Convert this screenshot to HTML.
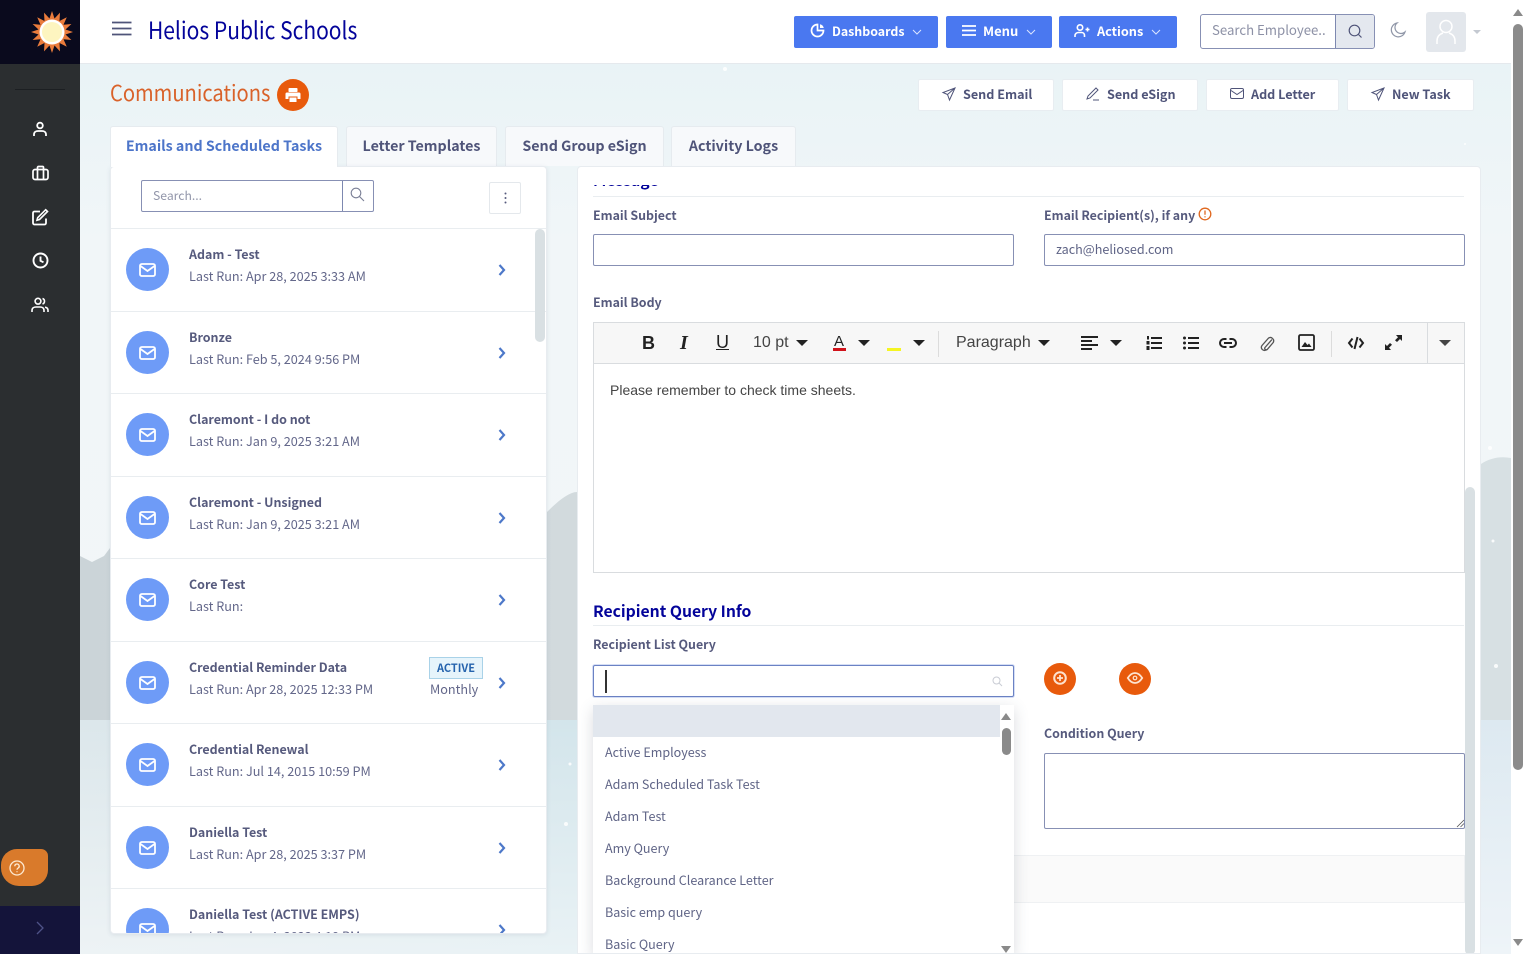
<!DOCTYPE html>
<html><head><meta charset="utf-8"><title>Communications</title>
<style>
*{box-sizing:border-box}
html,body{margin:0;padding:0;width:1526px;height:954px;overflow:hidden;background:#fff}
body{font-family:"Noto Sans CJK JP","Liberation Sans",sans-serif;color:#4f5479;position:relative}
.a{position:absolute}
.t{position:absolute;white-space:nowrap;line-height:1}
svg{position:absolute;overflow:visible}
.btn{position:absolute;top:16px;height:32px;background:#4a78f0;border-radius:2px;color:#fff;font-size:12.4px;font-weight:700}
.btn span{position:absolute;top:7px;line-height:16px;white-space:nowrap}
.wb{position:absolute;top:79px;height:32px;background:#fff;border:1px solid #e8edf1;border-radius:2px;color:#4f5479;font-size:12.6px;font-weight:700}
.wb span{position:absolute;top:6px;line-height:16px;white-space:nowrap}
.tab{position:absolute;top:126px;height:40px;background:#f7f9fb;border:1px solid #e6ebef;border-bottom:0;border-radius:3px 3px 0 0;font-size:14.25px;font-weight:700;color:#4f5479;line-height:38px;text-align:center}
.row{position:absolute;left:0;width:437px;height:83px;border-top:1px solid #e9edf0}
.row .c{position:absolute;left:15px;top:19px;width:43px;height:43px;border-radius:50%;background:#6e9bf7}
.row .n{position:absolute;left:78px;top:17px;font-size:12.45px;line-height:16px;font-weight:700;color:#565a7d;white-space:nowrap}
.row .s{position:absolute;left:78px;top:39px;font-size:12.65px;line-height:16px;color:#63678a;white-space:nowrap}
.row svg.m{left:28px;top:33px}
.row svg.r{left:386.500px;top:35px}
.lab{position:absolute;font-size:12.4px;font-weight:700;color:#565a7d;line-height:16px;white-space:nowrap}
.inp{position:absolute;background:#fff;border:1px solid #8790b4;border-radius:2px}
.opt{position:absolute;left:12px;font-size:12.55px;line-height:16px;color:#5f6486;white-space:nowrap}
.tb{position:absolute;font-family:"Liberation Sans",sans-serif;color:#222}
.car{position:absolute;top:340px;width:0;height:0;border-left:6px solid transparent;border-right:6px solid transparent;border-top:6px solid #222}
</style></head><body>

<!-- page background -->
<div class="a" style="left:80px;top:64px;width:1431px;height:890px;background:linear-gradient(180deg,#e9f3f6 0%,#f1f6f8 20%,#f2f6f8 100%);overflow:hidden">
<svg width="1431" height="890" style="left:0;top:0">
<defs>
<linearGradient id="g1" x1="0" x2="1" y1="0" y2="0"><stop offset="0" stop-color="#cbd4d8"/><stop offset=".35" stop-color="#d2dadd"/><stop offset="1" stop-color="#d7e0e3"/></linearGradient>
<linearGradient id="g2" x1="0" x2="1" y1="0" y2="0"><stop offset="0" stop-color="#dce7eb"/><stop offset=".35" stop-color="#d3e5eb"/><stop offset="1" stop-color="#dde9f1"/></linearGradient>
<linearGradient id="g3" x1="0" x2="0" y1="0" y2="1"><stop offset="0" stop-color="#fff" stop-opacity="0"/><stop offset="1" stop-color="#fff" stop-opacity=".5"/></linearGradient>
</defs>
<path d="M0 492 L12 498 L24 492 L30 484 C120 470 300 465 467 448 C480 435 490 428 497 428 C700 420 1100 430 1401 400 C1410 394 1420 392 1431 394 L1431 656 L0 656Z" fill="url(#g1)"/>
<rect x="0" y="656" width="1431" height="234" fill="url(#g2)"/>
<rect x="0" y="656" width="1431" height="234" fill="url(#g3)"/>
<g fill="#fff" opacity=".85"><circle cx="1410" cy="384" r="2"/><circle cx="1416" cy="602" r="2"/><circle cx="1413" cy="477" r="1.5"/><circle cx="645" cy="5" r="2"/><circle cx="1385" cy="80" r="1"/><circle cx="490" cy="700" r="1.500"/><circle cx="486" cy="760" r="2"/></g>
</svg></div>

<!-- sidebar -->
<div class="a" style="left:0;top:0;width:80px;height:954px;background:#2b2e30"></div>
<div class="a" style="left:0;top:0;width:80px;height:64px;background:#0a0a1d"></div>
<div class="a" style="left:0;top:906px;width:80px;height:48px;background:#14143a"></div>
<div class="a" style="left:15px;top:89px;width:50px;height:1px;background:#1c1f22"></div>
<svg width="42" height="42" viewBox="-21 -21 42 42" style="left:31px;top:11px"><polygon points="21,0 13.5,2.5 19.4,8 11.500,7.200 14.8,14.8 7.5,11 8,19.4 2.5,13.5 0,21 -2.5,13.5 -8,19.4 -7.5,11 -14.8,14.8 -11.500,7.200 -19.4,8 -13.5,2.5 -21,0 -13.5,-2.5 -19.4,-8 -11.500,-7.200 -14.8,-14.8 -7.5,-11 -8,-19.4 -2.5,-13.5 0,-21 2.5,-13.5 8,-19.4 7.5,-11 14.8,-14.8 11.500,-7.200 19.4,-8 13.5,-2.5" fill="#ea7c3c"/><circle r="12.500" fill="#fff"/><circle r="10" fill="#fdf5c0"/></svg>
<svg width="16" height="16" viewBox="0 0 16 16" style="left:32px;top:121px" fill="none" stroke="#fff" stroke-width="1.800"><circle cx="8" cy="4.500" r="2.800"/><path d="M2 15v-1.500C2 11 4 10 6 10h4c2 0 4 1 4 3.500V15"/></svg>
<svg width="17" height="16" viewBox="0 0 17 16" style="left:31.500px;top:165px" fill="none" stroke="#fff" stroke-width="1.700"><rect x="1" y="4.500" width="15" height="10" rx="2"/><path d="M5.500 4.500V2.500a1 1 0 0 1 1-1h4a1 1 0 0 1 1 1v2M5.500 4.500v10M11.500 4.500v10"/></svg>
<svg width="17" height="17" viewBox="0 0 17 17" style="left:31.500px;top:209px" fill="none" stroke="#fff" stroke-width="1.800"><path d="M14 9.500V14a1.500 1.500 0 0 1-1.500 1.500h-10A1.500 1.500 0 0 1 1 14V4a1.500 1.500 0 0 1 1.500-1.500H8"/><path d="M15.500 2.500l-8 8-2.500.7.700-2.500 8-8z" stroke-width="1.600"/></svg>
<svg width="17" height="17" viewBox="0 0 17 17" style="left:31.500px;top:252px" fill="none" stroke="#fff" stroke-width="1.900"><circle cx="8.500" cy="8.500" r="7"/><path d="M8.500 4.500v4.300l3 1.500"/></svg>
<svg width="18" height="16" viewBox="0 0 18 16" style="left:31px;top:297px" fill="none" stroke="#fff" stroke-width="1.600"><circle cx="7" cy="4.200" r="2.900"/><path d="M1 15v-1.500C1 11 3 10 5 10h4c2 0 4 1 4 3.500V15"/><path d="M11.500 1.500a2.900 2.900 0 0 1 0 5.500M14 10.200c2 .3 3 1.500 3 3.300V15"/></svg>
<div class="a" style="left:1px;top:849px;width:47px;height:37px;background:#d97a2b;border-radius:16px 7px 16px 18px"></div>
<svg width="16" height="16" viewBox="0 0 16 16" style="left:9px;top:860px" fill="none" stroke="#fde9d2" stroke-width="1.300"><circle cx="8" cy="8" r="7"/><path d="M5.800 6.200a2.200 2.200 0 1 1 3.300 1.900C8.400 8.500 8 9 8 9.800M8 11.300v1"/></svg>
<svg width="10" height="14" viewBox="0 0 10 14" style="left:35px;top:921px" fill="none" stroke="#4e5288" stroke-width="1.300"><path d="M2 1l6 6-6 6"/></svg>

<!-- header -->
<div class="a" style="left:80px;top:0;width:1431px;height:64px;background:#fff;border-bottom:1px solid #e5e9ed"></div>
<svg width="20" height="16" viewBox="0 0 20 16" style="left:112px;top:21px" fill="none" stroke="#4f5479" stroke-width="1.800"><path d="M0 1.500h19.500M0 7.500h19.500M0 13.500h19.500"/></svg>
<div class="t" style="left:148px;top:15px;font-size:24px;line-height:28px;color:#03039a;transform:scaleX(.875);transform-origin:0 0">Helios Public Schools</div>

<div class="btn" style="left:794px;width:144px"><svg width="15" height="15" viewBox="0 0 15 15" style="left:16px;top:7px" fill="none" stroke="#fff" stroke-width="1.700"><path d="M7.500 1.500a6 6 0 1 0 6 6h-6z"/><path d="M10 1.200a5 5 0 0 1 3.800 3.800H10z" fill="#fff" stroke="none"/></svg><span style="left:38px">Dashboards</span><svg width="10" height="6" viewBox="0 0 10 6" style="left:118px;top:13px" fill="none" stroke="#dbe5ff" stroke-width="1"><path d="M1 1l4 4 4-4"/></svg></div>
<div class="btn" style="left:946px;width:106px"><svg width="14" height="11" viewBox="0 0 14 11" style="left:16px;top:9px" fill="none" stroke="#fff" stroke-width="1.700"><path d="M0 1h14M0 5.500h14M0 10h14"/></svg><span style="left:37px;font-size:13px">Menu</span><svg width="10" height="6" viewBox="0 0 10 6" style="left:80px;top:13px" fill="none" stroke="#dbe5ff" stroke-width="1"><path d="M1 1l4 4 4-4"/></svg></div>
<div class="btn" style="left:1059px;width:118px"><svg width="16" height="14" viewBox="0 0 16 14" style="left:15px;top:8px" fill="none" stroke="#fff" stroke-width="1.600"><circle cx="6" cy="3.500" r="2.700"/><path d="M1 13v-1.500C1 9.500 3 8.500 4.500 8.500h3c1.500 0 3 1 3 3V13M11.500 5.500h4M13.500 3.500v4"/></svg><span style="left:38px;font-size:12.700px">Actions</span><svg width="10" height="6" viewBox="0 0 10 6" style="left:92px;top:13px" fill="none" stroke="#dbe5ff" stroke-width="1"><path d="M1 1l4 4 4-4"/></svg></div>

<div class="inp" style="left:1200px;top:14px;width:175px;height:35px;border-radius:3px;overflow:hidden"><div class="t" style="left:11px;top:7px;font-size:13.2px;line-height:16px;color:#8d91a6">Search Employee..</div><div class="a" style="left:134px;top:0;width:40px;height:35px;background:#e4e8ef;border-left:1px solid #7d88b0"></div><svg width="15" height="16" viewBox="0 0 15 16" style="left:147px;top:9px" fill="none" stroke="#4f5479" stroke-width="1.200"><circle cx="6.500" cy="6.500" r="5.300"/><path d="M10.500 10.500l3 3"/></svg></div>
<svg width="16" height="16" viewBox="0 0 16 16" style="left:1390px;top:22px" fill="none" stroke="#9097a8" stroke-width="1.200"><path d="M7 1a7 7 0 1 0 8 9 6 6 0 0 1-8-9z"/></svg>
<div class="a" style="left:1426px;top:12px;width:40px;height:40px;background:#e3e7ec;border-radius:3px"></div>
<svg width="20" height="26" viewBox="0 0 20 26" style="left:1436px;top:19px" fill="none" stroke="#fff" stroke-width="1.500"><circle cx="10" cy="7.500" r="6"/><path d="M1 25v-3c0-5 3-7 6-8M19 25v-3c0-5-3-7-6-8"/></svg>
<div class="a" style="left:1473px;top:30px;width:0;height:0;border-left:4px solid transparent;border-right:4px solid transparent;border-top:4px solid #c4c9d1"></div>

<!-- title row -->
<div class="t" style="left:110px;top:78px;font-size:22px;line-height:28px;color:#d9622a;transform:scaleX(.915);transform-origin:0 0">Communications</div>
<div class="a" style="left:277px;top:79px;width:32px;height:32px;border-radius:50%;background:#e85a0c"></div>
<svg width="16" height="16" viewBox="0 0 16 16" style="left:285px;top:87px" fill="#fff"><rect x="3.500" y="1" width="9" height="4" rx=".8"/><path d="M2 5.500h12a1.500 1.500 0 0 1 1.500 1.500v5H12.500v-2.500h-9V12H.5V7A1.500 1.500 0 0 1 2 5.500z"/><rect x="4.500" y="10.500" width="7" height="4.500"/></svg>

<div class="wb" style="left:918px;width:136px"><svg width="14" height="14" viewBox="0 0 14 14" style="left:23px;top:7px" fill="none" stroke="#4f5479" stroke-width="1"><path d="M13 1L1 5.500l4.500 2L7.500 13zM13 1L5.500 7.500"/></svg><span style="left:44px">Send Email</span></div>
<div class="wb" style="left:1062px;width:136px"><svg width="14" height="14" viewBox="0 0 14 14" style="left:23px;top:7px" fill="none" stroke="#4f5479" stroke-width="1"><path d="M10 1l2 2-8 8-3 1 1-3zM7 13h6"/></svg><span style="left:44px">Send eSign</span></div>
<div class="wb" style="left:1206px;width:133px"><svg width="14" height="12" viewBox="0 0 14 12" style="left:23px;top:8px" fill="none" stroke="#4f5479" stroke-width="1"><rect x=".5" y=".5" width="13" height="10" rx="1.500"/><path d="M1 2.500l6 4 6-4"/></svg><span style="left:44px">Add Letter</span></div>
<div class="wb" style="left:1347px;width:127px"><svg width="14" height="14" viewBox="0 0 14 14" style="left:23px;top:7px" fill="none" stroke="#4f5479" stroke-width="1"><path d="M13 1L1 5.500l4.500 2L7.500 13zM13 1L5.500 7.500"/></svg><span style="left:44px">New Task</span></div>

<!-- tabs -->
<div class="tab" style="left:110px;width:228px;background:#fff;color:#4d75c9;height:41px;z-index:3">Emails and Scheduled Tasks</div>
<div class="tab" style="left:346px;width:151px">Letter Templates</div>
<div class="tab" style="left:505px;width:159px">Send Group eSign</div>
<div class="tab" style="left:671px;width:125px">Activity Logs</div>

<!-- left panel -->
<div class="a" style="left:110px;top:166px;width:437px;height:768px;background:#fff;border:1px solid #e8ecf0;border-radius:4px;box-shadow:0 1px 4px rgba(80,100,120,.12);overflow:hidden">
 <div class="inp" style="left:30px;top:13px;width:233px;height:32px"><div class="t" style="left:11px;top:6px;font-size:12.2px;line-height:16px;color:#9296aa">Search...</div><div class="a" style="left:200px;top:0;width:1px;height:30px;background:#7d88b0"></div><svg width="15" height="15" viewBox="0 0 15 15" style="left:208px;top:6px" fill="none" stroke="#7a7f96" stroke-width="1.100"><circle cx="6" cy="6" r="4.800"/><path d="M9.500 9.500l4.500 4.500"/></svg></div>
 <div class="a" style="left:378px;top:15px;width:32px;height:32px;border:1px solid #e4e8ec;border-radius:2px"></div>
 <svg width="3" height="12" viewBox="0 0 3 12" style="left:393px;top:25px" fill="#565a7d"><circle cx="1.500" cy="1.500" r="1"/><circle cx="1.500" cy="6" r="1"/><circle cx="1.500" cy="10.500" r="1"/></svg>

 <div class="row" style="top:61px"><div class="c"></div><svg class="m" width="17" height="14" viewBox="0 0 17 14" fill="none" stroke="#fff" stroke-width="1.800" style="top:34px"><rect x="1" y="1" width="15" height="12" rx="1.800"/><path d="M1.500 3l7 5 7-5"/></svg><div class="n">Adam - Test</div><div class="s">Last Run: Apr 28, 2025 3:33 AM</div><svg class="r" width="8" height="12" viewBox="0 0 8 12" fill="none" stroke="#4d78c9" stroke-width="2.200"><path d="M1.500 1l4.500 5-4.500 5"/></svg></div>
 <div class="row" style="top:144px"><div class="c"></div><svg class="m" width="17" height="14" viewBox="0 0 17 14" fill="none" stroke="#fff" stroke-width="1.800" style="top:34px"><rect x="1" y="1" width="15" height="12" rx="1.800"/><path d="M1.500 3l7 5 7-5"/></svg><div class="n">Bronze</div><div class="s">Last Run: Feb 5, 2024 9:56 PM</div><svg class="r" width="8" height="12" viewBox="0 0 8 12" fill="none" stroke="#4d78c9" stroke-width="2.200"><path d="M1.500 1l4.500 5-4.500 5"/></svg></div>
 <div class="row" style="top:226px"><div class="c"></div><svg class="m" width="17" height="14" viewBox="0 0 17 14" fill="none" stroke="#fff" stroke-width="1.800" style="top:34px"><rect x="1" y="1" width="15" height="12" rx="1.800"/><path d="M1.500 3l7 5 7-5"/></svg><div class="n">Claremont - I do not</div><div class="s">Last Run: Jan 9, 2025 3:21 AM</div><svg class="r" width="8" height="12" viewBox="0 0 8 12" fill="none" stroke="#4d78c9" stroke-width="2.200"><path d="M1.500 1l4.500 5-4.500 5"/></svg></div>
 <div class="row" style="top:309px"><div class="c"></div><svg class="m" width="17" height="14" viewBox="0 0 17 14" fill="none" stroke="#fff" stroke-width="1.800" style="top:34px"><rect x="1" y="1" width="15" height="12" rx="1.800"/><path d="M1.500 3l7 5 7-5"/></svg><div class="n">Claremont - Unsigned</div><div class="s">Last Run: Jan 9, 2025 3:21 AM</div><svg class="r" width="8" height="12" viewBox="0 0 8 12" fill="none" stroke="#4d78c9" stroke-width="2.200"><path d="M1.500 1l4.500 5-4.500 5"/></svg></div>
 <div class="row" style="top:391px"><div class="c"></div><svg class="m" width="17" height="14" viewBox="0 0 17 14" fill="none" stroke="#fff" stroke-width="1.800" style="top:34px"><rect x="1" y="1" width="15" height="12" rx="1.800"/><path d="M1.500 3l7 5 7-5"/></svg><div class="n">Core Test</div><div class="s">Last Run:</div><svg class="r" width="8" height="12" viewBox="0 0 8 12" fill="none" stroke="#4d78c9" stroke-width="2.200"><path d="M1.500 1l4.500 5-4.500 5"/></svg></div>
 <div class="row" style="top:474px"><div class="c"></div><svg class="m" width="17" height="14" viewBox="0 0 17 14" fill="none" stroke="#fff" stroke-width="1.800" style="top:34px"><rect x="1" y="1" width="15" height="12" rx="1.800"/><path d="M1.500 3l7 5 7-5"/></svg><div class="n">Credential Reminder Data</div><div class="s">Last Run: Apr 28, 2025 12:33 PM</div><div class="a" style="left:318px;top:15px;width:54px;height:22px;background:#e6f4fb;border:1px solid #a9d2e8;font-size:11px;font-weight:700;color:#2563ad;text-align:center;line-height:20px">ACTIVE</div><div class="a" style="left:319px;top:39px;font-size:12.65px;line-height:16px;color:#63678a">Monthly</div><svg class="r" width="8" height="12" viewBox="0 0 8 12" fill="none" stroke="#4d78c9" stroke-width="2.200"><path d="M1.500 1l4.500 5-4.500 5"/></svg></div>
 <div class="row" style="top:556px"><div class="c"></div><svg class="m" width="17" height="14" viewBox="0 0 17 14" fill="none" stroke="#fff" stroke-width="1.800" style="top:34px"><rect x="1" y="1" width="15" height="12" rx="1.800"/><path d="M1.500 3l7 5 7-5"/></svg><div class="n">Credential Renewal</div><div class="s">Last Run: Jul 14, 2015 10:59 PM</div><svg class="r" width="8" height="12" viewBox="0 0 8 12" fill="none" stroke="#4d78c9" stroke-width="2.200"><path d="M1.500 1l4.500 5-4.500 5"/></svg></div>
 <div class="row" style="top:639px"><div class="c"></div><svg class="m" width="17" height="14" viewBox="0 0 17 14" fill="none" stroke="#fff" stroke-width="1.800" style="top:34px"><rect x="1" y="1" width="15" height="12" rx="1.800"/><path d="M1.500 3l7 5 7-5"/></svg><div class="n">Daniella Test</div><div class="s">Last Run: Apr 28, 2025 3:37 PM</div><svg class="r" width="8" height="12" viewBox="0 0 8 12" fill="none" stroke="#4d78c9" stroke-width="2.200"><path d="M1.500 1l4.500 5-4.500 5"/></svg></div>
 <div class="row" style="top:721px"><div class="c"></div><svg class="m" width="17" height="14" viewBox="0 0 17 14" fill="none" stroke="#fff" stroke-width="1.800" style="top:34px"><rect x="1" y="1" width="15" height="12" rx="1.800"/><path d="M1.500 3l7 5 7-5"/></svg><div class="n">Daniella Test (ACTIVE EMPS)</div><div class="s">Last Run: Jan 4, 2023 4:19 PM</div><svg class="r" width="8" height="12" viewBox="0 0 8 12" fill="none" stroke="#4d78c9" stroke-width="2.200"><path d="M1.500 1l4.500 5-4.500 5"/></svg></div>
 <div class="a" style="left:424px;top:62px;width:10px;height:113px;background:#d9e0e3;border-radius:5px"></div>
</div>

<!-- right panel -->
<div class="a" style="left:577px;top:166px;width:904px;height:788px;background:#fff;border:1px solid #e8ecf0;border-radius:4px 4px 0 0;overflow:hidden">
 <div class="a" style="left:0;top:18px;width:890px;height:11px;overflow:hidden"><div class="t" style="left:15px;top:-15px;font-size:15.7px;line-height:20px;font-weight:700;color:#03039a">Message</div></div>
 <div class="a" style="left:15px;top:29px;width:871px;height:1px;background:#e9edf0"></div>
 <div class="lab" style="left:15px;top:40px">Email Subject</div>
 <div class="lab" style="left:466px;top:40px">Email Recipient(s), if any</div>
 <svg width="14" height="14" viewBox="0 0 14 14" style="left:620px;top:40px" fill="none" stroke="#e0681f" stroke-width="1.300"><circle cx="7" cy="7" r="5.800"/><path d="M7 3.500v4.200M7 9.200v1.200"/></svg>
 <div class="inp" style="left:15px;top:67px;width:421px;height:32px"></div>
 <div class="inp" style="left:466px;top:67px;width:421px;height:32px"><div class="t" style="left:11px;top:6px;font-size:12.6px;line-height:16px;color:#5f6486">zach@heliosed.com</div></div>
 <div class="lab" style="left:15px;top:127px">Email Body</div>

 <div class="a" style="left:15px;top:155px;width:872px;height:251px;border:1px solid #d9dcdf;background:#fff">
  <div class="a" style="left:0;top:0;width:870px;height:41px;background:#f7f7f7;border-bottom:1px solid #d9dcdf"></div>
  <div class="a" style="left:833px;top:0;width:1px;height:41px;background:#d9dcdf"></div>
  <div class="a" style="left:344px;top:8px;width:1px;height:26px;background:#dcdcdc"></div>
  <div class="a" style="left:737px;top:8px;width:1px;height:26px;background:#dcdcdc"></div>
  <div class="t" style="left:16px;top:58px;font-family:'Liberation Sans',sans-serif;font-size:14px;line-height:18px;color:#444">Please remember to check time sheets.</div>
 </div>
 <!-- toolbar -->
 <div class="tb t" style="left:64px;top:166px;font-size:18px;line-height:20px;font-weight:700">B</div>
 <div class="tb t" style="left:102px;top:165px;font-size:20px;line-height:22px;font-weight:700;font-style:italic;font-family:'Liberation Serif',serif">I</div>
 <div class="tb t" style="left:138px;top:165px;font-size:18px;line-height:20px;text-decoration:underline">U</div>
 <div class="tb t" style="left:175px;top:166px;font-size:16px;line-height:20px;color:#444">10 pt</div>
 <div class="tb t" style="left:256px;top:166px;font-size:15px;line-height:18px">A</div>
 <div class="a" style="left:255px;top:181px;width:13px;height:3px;background:#d0121a"></div>
 <div class="a" style="left:309px;top:181px;width:14px;height:3px;background:#f5f522"></div>
 <div class="tb t" style="left:378px;top:166px;font-size:16px;line-height:20px;color:#444">Paragraph</div>
 <svg width="18" height="14" viewBox="0 0 18 14" style="left:503px;top:169px" fill="#222"><rect y="0" width="17" height="2"/><rect y="4" width="11" height="2"/><rect y="8" width="17" height="2"/><rect y="12" width="11" height="2"/></svg>
 <svg width="16" height="14" viewBox="0 0 16 14" style="left:568px;top:169px" fill="#222"><rect x="5" y="1" width="11" height="2"/><rect x="5" y="6" width="11" height="2"/><rect x="5" y="11" width="11" height="2"/><rect x="1" y="0" width="2" height="3.500"/><rect x=".5" y="5" width="3" height="3.500"/><rect x=".5" y="10" width="3" height="4"/></svg>
 <svg width="16" height="14" viewBox="0 0 16 14" style="left:605px;top:169px" fill="#222"><rect x="5" y="1" width="11" height="2"/><rect x="5" y="6" width="11" height="2"/><rect x="5" y="11" width="11" height="2"/><circle cx="1.500" cy="2" r="1.500"/><circle cx="1.500" cy="7" r="1.500"/><circle cx="1.500" cy="12" r="1.500"/></svg>
 <svg width="18" height="10" viewBox="0 0 18 10" style="left:641px;top:171px" fill="none" stroke="#222" stroke-width="2"><path d="M7.500 1H5a4 4 0 0 0 0 8h2.500M10.500 1H13a4 4 0 0 1 0 8h-2.500M5 5h8"/></svg>
 <svg width="14" height="16" viewBox="0 0 14 16" style="left:682px;top:169px" fill="none" stroke="#555" stroke-width="1.300"><path d="M12 3.500L5 11.500a1.500 1.500 0 0 0 2.200 2l6-7a3.300 3.300 0 0 0-4.800-4.300L2 9.500c-2 3 1.500 6.500 4.500 4"/></svg>
 <svg width="17" height="17" viewBox="0 0 17 17" style="left:720px;top:167px"><rect x="1" y="1" width="15" height="15" rx="1.500" fill="none" stroke="#222" stroke-width="1.800"/><path d="M3.500 13l3.500-5 2.500 3 1.500-1.500 2.500 3.500z" fill="#222"/></svg>
 <svg width="16" height="12" viewBox="0 0 16 12" style="left:770px;top:170px" fill="none" stroke="#222" stroke-width="2"><path d="M4.500 1.500L1 6l3.500 4.500M11.500 1.500L15 6l-3.500 4.500M9.500 0L6.500 12"/></svg>
 <svg width="17" height="15" viewBox="0 0 17 15" style="left:807px;top:168px" fill="#222"><path d="M11 0h6v6l-2-2-3 3-2-1.800 3-3zM6 15H0V9l2 2 3-3 2 1.800-3 3z"/></svg>

 <div class="a" style="left:15px;top:434px;font-size:15.7px;line-height:20px;font-weight:700;color:#03039a;white-space:nowrap">Recipient Query Info</div>
 <div class="a" style="left:15px;top:458px;width:871px;height:1px;background:#e9edf0"></div>
 <div class="lab" style="left:15px;top:469px">Recipient List Query</div>
 <div class="inp" style="left:15px;top:498px;width:421px;height:32px;border-color:#6b82c4;box-shadow:0 0 0 1px #d5def5"><div class="a" style="left:11px;top:4px;width:1.500px;height:23px;background:#333"></div><svg width="11" height="11" viewBox="0 0 11 11" style="left:398px;top:10px" fill="none" stroke="#c9ccd4" stroke-width="1"><circle cx="4.500" cy="4.500" r="3.500"/><path d="M7 7l3 3"/></svg></div>
 <div class="a" style="left:466px;top:496px;width:32px;height:32px;border-radius:50%;background:#e85a0c"></div>
 <svg width="14" height="14" viewBox="0 0 14 14" style="left:475px;top:504px" fill="none" stroke="#fde3d0" stroke-width="2"><circle cx="7" cy="7" r="5.800"/><path d="M7 4v6M4 7h6" stroke-width="1.800"/></svg>
 <div class="a" style="left:541px;top:496px;width:32px;height:32px;border-radius:50%;background:#e85a0c"></div>
 <svg width="16" height="12" viewBox="0 0 16 12" style="left:549px;top:505px" fill="none" stroke="#fde3d0" stroke-width="1.800"><path d="M.8 6C3 2.500 5.500 1 8 1s5 1.500 7.200 5C13 9.500 10.500 11 8 11S3 9.500.8 6z"/><circle cx="8" cy="6" r="1.800" stroke-width="1.200"/></svg>

 <div class="lab" style="left:466px;top:558px">Condition Query</div>
 <div class="inp" style="left:466px;top:586px;width:421px;height:76px"><svg width="8" height="8" viewBox="0 0 8 8" style="left:411px;top:65px" fill="none" stroke="#555" stroke-width=".8"><path d="M1 8l7-7M4.500 8L8 4.500"/></svg></div>
 <div class="a" style="left:15px;top:688px;width:872px;height:48px;background:#fafafa;border:1px solid #eff1f3"></div>

 <!-- dropdown -->
 <div class="a" style="left:15px;top:538px;width:421px;height:250px;background:#fff;box-shadow:0 4px 14px rgba(70,80,100,.2)">
  <div class="a" style="left:0;top:0;width:407px;height:32px;background:#e2e7ee"></div>
  <div class="opt" style="top:39px">Active Employess</div>
  <div class="opt" style="top:71px">Adam Scheduled Task Test</div>
  <div class="opt" style="top:103px">Adam Test</div>
  <div class="opt" style="top:135px">Amy Query</div>
  <div class="opt" style="top:167px">Background Clearance Letter</div>
  <div class="opt" style="top:199px">Basic emp query</div>
  <div class="opt" style="top:231px">Basic Query</div>
  <div class="a" style="left:408px;top:8px;width:0;height:0;border-left:5px solid transparent;border-right:5px solid transparent;border-bottom:7px solid #8a8a8a"></div>
  <div class="a" style="left:409px;top:23px;width:9px;height:27px;background:#8a8a8a;border-radius:5px"></div>
  <div class="a" style="left:408px;top:241px;width:0;height:0;border-left:5px solid transparent;border-right:5px solid transparent;border-top:7px solid #8a8a8a"></div>
 </div>

 <div class="a" style="left:887px;top:320px;width:10px;height:468px;background:#d9e0e3;border-radius:5px"></div>
</div>

<!-- toolbar carets -->
<div class="car" style="left:796px"></div><div class="car" style="left:858px"></div><div class="car" style="left:913px"></div><div class="car" style="left:1038px"></div><div class="car" style="left:1110px"></div><div class="car" style="left:1439px;border-top-color:#444"></div>

<!-- page scrollbar -->
<div class="a" style="left:1511px;top:0;width:15px;height:954px;background:#fff"></div>
<div class="a" style="left:1513px;top:24px;width:10px;height:746px;background:#8b8b8b;border-radius:5px"></div>
<div class="a" style="left:1513px;top:9px;width:0;height:0;border-left:5px solid transparent;border-right:5px solid transparent;border-bottom:7px solid #8a8a8a"></div>
<div class="a" style="left:1513px;top:939px;width:0;height:0;border-left:5px solid transparent;border-right:5px solid transparent;border-top:7px solid #8a8a8a"></div>
</body></html>
